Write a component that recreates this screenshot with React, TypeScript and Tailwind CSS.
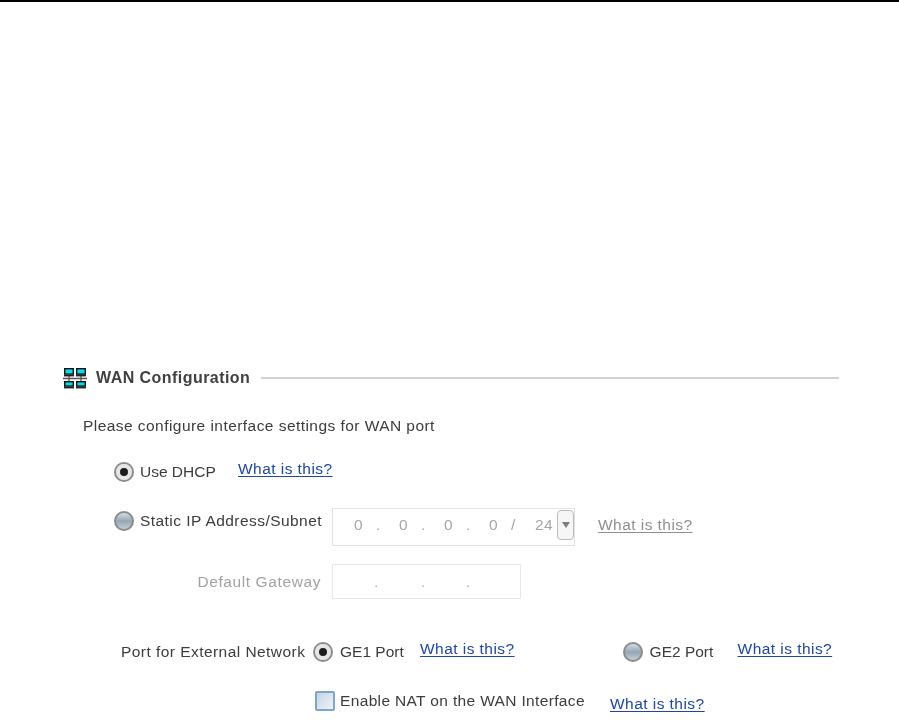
import React from "react";

function Link({ muted = false, className = "" }: { muted?: boolean; className?: string }) {
  return (
    <span className={`underline underline-offset-2 decoration-1 text-[15.5px] tracking-[0.45px] leading-[18px] whitespace-nowrap ${muted ? "text-[#8f8f8f]" : "text-[#1d46a8]"} ${className}`}>
      What is this?
    </span>
  );
}

function Radio({ on = false }: { on?: boolean }) {
  return (
    <span className="shrink-0 w-[20px] h-[20px] rounded-full border-2 border-[#8b8b8b] bg-gradient-to-b from-[#d5dde2] via-[#93a7b3] to-[#c3ced5] flex items-center justify-center">
      {on && (
        <span className="w-[16px] h-[16px] rounded-full bg-[#e6e6e6] flex items-center justify-center">
          <span className="w-[8px] h-[8px] rounded-full bg-[#1c1c1c]" />
        </span>
      )}
    </span>
  );
}

function NetIcon() {
  const pc = (x: number, y: number, h: number) => (
    <g key={`${x}-${y}`}>
      <rect x={x + 0.7} y={y + 0.7} width="8.6" height={h} fill="#00e0e8" stroke="#111" strokeWidth="1.4" />
      <rect x={x} y={y + h + 1.4} width="10" height="1.6" fill="#222" />
    </g>
  );
  return (
    <svg width="25" height="24" viewBox="0 0 25 24" className="shrink-0">
      <path d="M6 10V15M18 10V15M0 12.5H24" stroke="#555" strokeWidth="1.3" fill="none" />
      {pc(1, 2, 5.4)}
      {pc(13, 2, 5.4)}
      {pc(1, 15, 4.4)}
      {pc(13, 15, 4.4)}
    </svg>
  );
}

export default function App() {
  return (
    <div className="w-[899px] h-[725px] overflow-hidden bg-white border-t-2 border-black font-['Liberation_Sans',Arial,sans-serif] text-[15.5px] tracking-[0.45px] text-[#3c3c3c] blur-[0.35px]">
      <div className="pt-[364px] pl-[63px] w-[839px] flex flex-col">
        <div className="flex items-center h-[24px]">
          <NetIcon />
          <span className="ml-[8px] font-bold text-[16px] text-[#404040] whitespace-nowrap">WAN Configuration</span>
          <span className="ml-[11px] flex-1 h-[2px] bg-[#d2d2d2]" />
        </div>

        <div className="mt-[27px] ml-[20px] h-[18px] leading-[18px] whitespace-nowrap">Please configure interface settings for WAN port</div>

        <div className="mt-[26px] ml-[51px] h-[22px] flex items-center">
          <Radio on />
          <span className="ml-[6px] w-[98px] tracking-normal">Use DHCP</span>
          <Link className="-translate-y-[3px]" />
        </div>

        <div className="mt-[25px] ml-[51px] h-[38px] flex items-center">
          <div className="w-[208px] flex items-center -translate-y-[6px]">
            <Radio />
            <span className="ml-[6px] whitespace-nowrap">Static IP Address/Subnet</span>
          </div>
          <div className="ml-[10px] w-[243px] h-[38px] border border-[#e2e2e2] flex items-center text-[#a6a6a6] text-[15.5px]">
            <span className="ml-[21px] w-[22px] -translate-y-[2px]">0</span>
            <span className="w-[23px] -translate-y-[2px]">.</span>
            <span className="w-[22px] -translate-y-[2px]">0</span>
            <span className="w-[23px] -translate-y-[2px]">.</span>
            <span className="w-[22px] -translate-y-[2px]">0</span>
            <span className="w-[23px] -translate-y-[2px]">.</span>
            <span className="w-[22px] -translate-y-[2px]">0</span>
            <span className="w-[24px] -translate-y-[2px]">/</span>
            <span className="w-[22px] -translate-y-[2px]">24</span>
            <span className="w-[17px] h-[30px] -translate-y-[2px] border border-[#bcbcbc] rounded-[4px] bg-[#f6f6f6] flex items-center justify-center">
              <span className="w-0 h-0 border-x-[4px] border-x-transparent border-t-[6px] border-t-[#7d7d7d]" />
            </span>
          </div>
          <Link muted className="ml-[23px] -translate-y-[2px]" />
        </div>

        <div className="mt-[18px] ml-[51px] h-[35px] flex items-center">
          <span className="w-[207px] text-right text-[#a2a2a2] whitespace-nowrap tracking-[0.6px]">Default Gateway</span>
          <div className="ml-[11px] w-[189px] h-[35px] border border-[#e8e8e8] flex items-center text-[#b4b4b4]">
            <span className="ml-[41px] w-[47px]">.</span>
            <span className="w-[45px]">.</span>
            <span>.</span>
          </div>
        </div>

        <div className="mt-[42px] ml-[58px] h-[22px] flex items-center">
          <span className="w-[192px] whitespace-nowrap">Port for External Network</span>
          <Radio on />
          <span className="ml-[7px] w-[80px] whitespace-nowrap tracking-normal">GE1 Port</span>
          <Link className="-translate-y-[3px]" />
          <span className="ml-[108px]"><Radio /></span>
          <span className="ml-[7px] w-[88px] whitespace-nowrap tracking-normal">GE2 Port</span>
          <Link className="-translate-y-[3px]" />
        </div>

        <div className="mt-[27px] ml-[252px] h-[22px] flex items-center">
          <span className="shrink-0 w-[20px] h-[20px] border-2 border-[#7aa6d0] rounded-[2px] bg-gradient-to-br from-[#c6d4e2] to-[#f0f3f6]" />
          <span className="ml-[5px] w-[270px] whitespace-nowrap tracking-[0.35px]">Enable NAT on the WAN Interface</span>
          <Link className="translate-y-[3px]" />
        </div>
      </div>
    </div>
  );
}
